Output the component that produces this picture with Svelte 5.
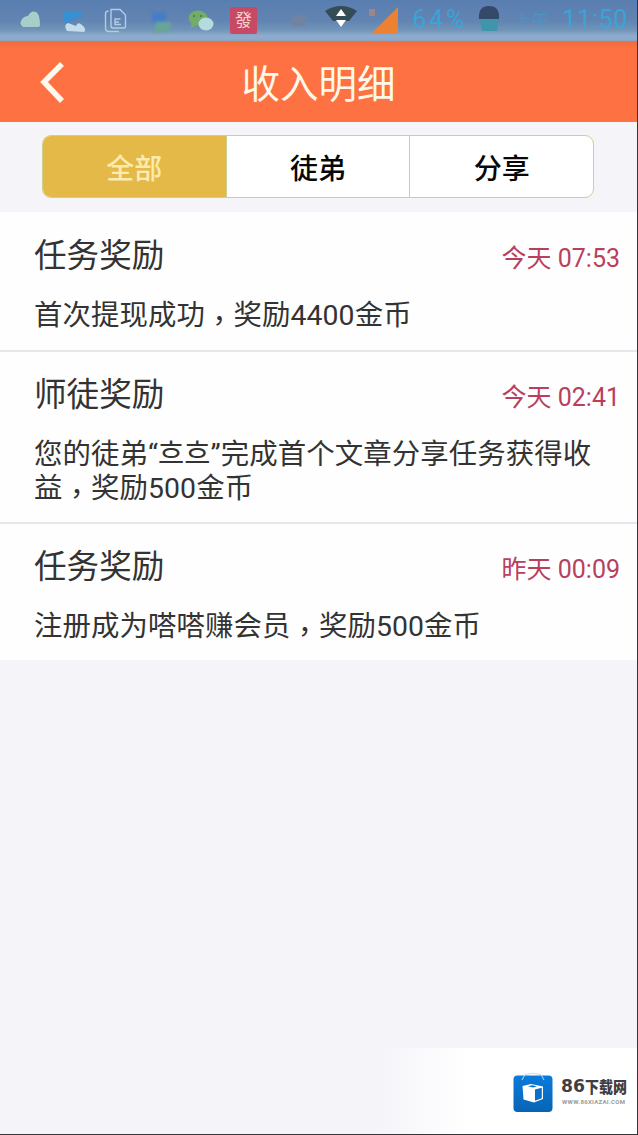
<script>
	const tabs = ['全部', '徒弟', '分享'];
	let active = $state(0);

	const records = [
		{ title: '任务奖励', time: '今天 07:53', text: '首次提现成功，奖励4400金币' },
		{
			title: '师徒奖励',
			time: '今天 02:41',
			text: '您的徒弟“흐흐”完成首个文章分享任务获得收益，奖励500金币'
		},
		{ title: '任务奖励', time: '昨天 00:09', text: '注册成为嗒嗒赚会员，奖励500金币' }
	];
</script>

<div class="screen">
	<div class="status">
		<svg width="637" height="42" viewBox="0 0 637 42">
			<defs>
				<filter id="soft" x="-20%" y="-20%" width="140%" height="140%">
					<feGaussianBlur stdDeviation="0.7" />
				</filter>
				<filter id="softer" x="-20%" y="-20%" width="140%" height="140%">
					<feGaussianBlur stdDeviation="1.4" />
				</filter>
			</defs>
			<g filter="url(#soft)">
				<path d="M23 27 Q18 23 23 18 Q25 16 28 16 Q31 10 36 12 Q40 14 40 25 Q40 27 37 27Z" fill="#a9cdc9" />
				<path d="M63 21 Q61 12 68 11 H82 V18 H75 L69 23Z" fill="#3490d4" />
				<path d="M67 31 Q63 25 68 23 L76 26 Q78 21 82 25 Q87 29 84 32Z" fill="#c2dcec" />
			</g>
			<g fill="none" stroke="#b5cbe2" stroke-width="1.4">
				<path d="M111 9.500 H120 L125.500 15 V26 Q125.500 28 123.500 28 H113 Q111 28 111 26Z" />
				<path d="M108.500 11 Q105.500 11 105.500 14 V28 Q105.500 31.500 109 31.500 H119" />
				<path d="M120.500 19 H115 V24.500 H121 M115 22 H119" />
			</g>
			<g filter="url(#soft)">
				<ellipse cx="198" cy="18" rx="9.500" ry="7.500" fill="#72ad65" />
				<path d="M191 23 L191 28 L197 25Z" fill="#72ad65" />
				<ellipse cx="206" cy="24" rx="7.500" ry="6.500" fill="#b5dbe0" />
				<g fill="#456f7b">
					<circle cx="194" cy="16" r="1" />
					<circle cx="201" cy="16" r="1" />
				</g>
				<rect x="230" y="7" width="27" height="27" rx="2" fill="#c74a66" />
			</g>
			<g filter="url(#softer)">
				<path d="M152 12 H166 V23 H152Z" fill="#477dc6" />
				<path d="M156 22 H171 V31 L154 33Z" fill="#67a596" />
				<path d="M291 16 H306 V26 H291Z" fill="#71839f" />
			</g>
			<text x="243.500" y="26" class="stamp">發</text>
			<g filter="url(#soft)">
				<path d="M325 11 Q341 1 357 11 L349 21 H333Z" fill="#344c56" />
				<path d="M341 9 L346 16 H336Z M336 20 H346 L341 27Z" fill="#fff" />
				<path d="M372 33 L398 7 V33Z" fill="#ed8130" />
				<path d="M369 9 H375 V16 H369Z" fill="#a08587" />
				<path d="M479 19 Q478 6 489 6 Q500 6 499 19Z" fill="#35496b" />
				<path d="M480 20 H499 L497 31 H482Z" fill="#4195ad" />
			</g>
			<g class="faint" filter="url(#soft)">
				<text x="412" y="28" textLength="52">64%</text>
				<text x="513" y="27" textLength="36" class="half">上午</text>
				<text x="562" y="28" textLength="65">11:50</text>
			</g>
		</svg>
	</div>

	<header>
		<button class="back" aria-label="返回">
			<svg width="28" height="44" viewBox="0 0 28 44">
				<path d="M25 4 L7 22 L25 41" fill="none" stroke="#fff8ec" stroke-width="5.500" />
			</svg>
		</button>
		<h1>收入明细</h1>
	</header>

	<nav>
		{#each tabs as tab, i}
			<button class:active={active === i} onclick={() => (active = i)}>{tab}</button>
		{/each}
	</nav>

	<main>
		{#each records as record}
			<article>
				<div class="top">
					<h2>{record.title}</h2>
					<time>{record.time}</time>
				</div>
				<p>
					{#each record.text.split('，') as part, i}{#if i > 0}<span class="comma">，</span
							>{/if}{part}{/each}
				</p>
			</article>
		{/each}
	</main>

	<footer>
		<svg width="40" height="42" viewBox="0 0 40 42">
			<defs>
				<linearGradient id="bag" x1="0" y1="0" x2="0" y2="1">
					<stop offset="0" stop-color="#0a7bdb" />
					<stop offset="1" stop-color="#0864b4" />
				</linearGradient>
			</defs>
			<rect x="0.500" y="3.500" width="39" height="36.500" rx="4" fill="url(#bag)" />
			<path d="M9 8 L12 2.500 Q20 0 28 2.500 L31 8" fill="none" stroke="#c3dcee" stroke-width="1" />
			<path d="M9.500 14 L18 12 L30 14.500 V27 L21 30.500 L10.500 27.500Z" fill="#fff" />
			<path d="M15 14.300 L19 13.200 L24 14.300 L20 15.600Z" fill="#0870c8" />
			<path d="M22 17.500 L28.800 15.700 V26.300 L22 28.800Z" fill="#0870c8" />
		</svg>
		<div class="brand">
			<svg width="68" height="34" viewBox="0 0 68 34">
				<text class="name" x="0" y="16.500" textLength="24" lengthAdjust="spacingAndGlyphs">86</text>
				<text class="name cjk" x="24" y="17.500" textLength="42" lengthAdjust="spacingAndGlyphs">下载网</text>
				<text class="site" x="1" y="29" textLength="63">WWW.86XIAZAI.COM</text>
			</svg>
		</div>
	</footer>
</div>

<style>
	:global(body) {
		background: #f4f4f9;
	}
	.screen {
		box-sizing: border-box;
		display: flex;
		flex-direction: column;
		width: 638px;
		height: 1135px;
		overflow: hidden;
		border-right: 1px solid #35353b;
		border-bottom: 1px solid #35353b;
		background: #f4f4f9;
		color: #333;
		font-family: Roboto, 'Noto Sans CJK SC', 'Noto Sans CJK KR', sans-serif;
	}
	svg {
		display: block;
		overflow: visible;
	}
	button {
		padding: 0;
		border: 0;
		background: none;
		font: inherit;
	}
	h1,
	h2,
	p {
		margin: 0;
		font-weight: 400;
	}
	.status {
		height: 42px;
		flex: none;
		background: linear-gradient(#587eb0, #6284b2 50%, #7195b8 72%, #8daccd 85%, #8da9c9 96%, #a57b83);
	}
	.stamp {
		fill: #f5d3c7;
		font-size: 17px;
		text-anchor: middle;
	}
	.faint {
		fill: #34aade;
		font-size: 25px;
		opacity: 0.85;
	}
	.half {
		font-size: 18px;
		opacity: 0.5;
	}
	header {
		display: grid;
		grid-template-columns: 80px 1fr 80px;
		align-items: center;
		height: 80px;
		flex: none;
		background: linear-gradient(#f26d3c, #fe7143 10%);
	}
	.back {
		justify-self: start;
		margin-left: 37px;
	}
	h1 {
		padding-top: 5px;
		color: #fff8e8;
		font-size: 38.500px;
		line-height: 75px;
		text-align: center;
	}
	nav {
		box-sizing: border-box;
		display: flex;
		width: 552px;
		height: 63px;
		flex: none;
		margin: 13px 0 14px 42px;
		overflow: hidden;
		border: 1px solid #cdd08f;
		border-radius: 9px;
		background: #fff;
	}
	nav button {
		flex: 1;
		padding-top: 6px;
		color: #080808;
		font-size: 28px;
		font-weight: 500;
		line-height: 55px;
	}
	nav button + button {
		border-left: 1px solid #cdd08f;
	}
	nav .active {
		background: #e4b948;
		color: #fcebae;
	}
	main {
		flex: none;
		background: #fefefe;
	}
	article {
		padding: 20px 17px 17px 34px;
	}
	article + article {
		padding-top: 19px;
		padding-bottom: 16px;
		border-top: 2px solid #e6e7eb;
	}
	.top {
		display: flex;
		justify-content: space-between;
		align-items: center;
		height: 48px;
	}
	h2 {
		font-size: 32.600px;
		line-height: 48px;
	}
	time {
		padding-top: 5px;
		color: #b9405c;
		font-size: 25px;
		line-height: 44px;
	}
	p {
		width: 570px;
		margin-top: 19px;
		font-size: 28.400px;
		line-height: 34px;
		letter-spacing: 0.1px;
	}
	/* the TC face centres the comma in its cell, lowered here to the baseline */
	.comma {
		font-family: 'Noto Sans CJK TC', sans-serif;
		line-height: 0;
		vertical-align: -0.22em;
	}
	footer {
		display: flex;
		gap: 8px;
		box-sizing: border-box;
		height: 86px;
		margin-top: auto;
		padding: 24px 8px 0 513px;
		background: linear-gradient(90deg, #f4f4f9 370px, #fff 470px);
	}
	.brand {
		padding-top: 3px;
	}
	.name {
		fill: #3f3f43;
		font-family: 'DejaVu Sans', sans-serif;
		font-size: 17px;
		font-weight: 700;
	}
	.cjk {
		font-family: 'Noto Sans CJK SC', sans-serif;
		font-size: 15.500px;
		font-weight: 900;
	}
	.site {
		fill: #999;
		font-size: 6px;
		font-weight: 700;
	}
</style>
